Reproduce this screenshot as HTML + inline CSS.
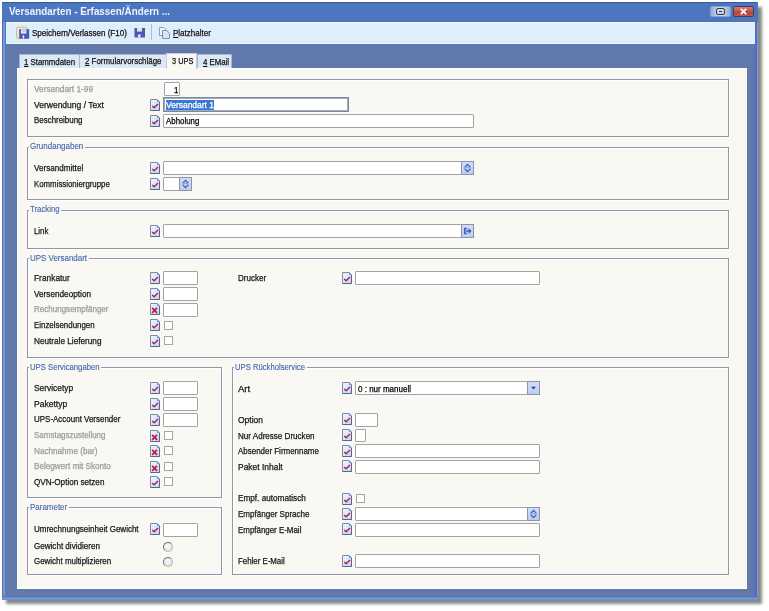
<!DOCTYPE html><html><head><meta charset="utf-8"><style>
html,body{margin:0;padding:0;width:769px;height:611px;overflow:hidden;background:#fff}
body{position:relative;font-family:"Liberation Sans",sans-serif}
.t{position:absolute;white-space:nowrap;line-height:10px;-webkit-text-stroke:0.25px currentColor;transform:scaleX(.93);transform-origin:0 0}
.ic{position:absolute;overflow:visible}
.gl{position:absolute;white-space:nowrap;line-height:10px;font-size:8.5px;transform:scaleX(.93);transform-origin:0 0;color:#4d63a8;background:#f9f8f3;padding:0 1px}
</style></head><body>
<svg width="0" height="0" style="position:absolute">
<defs>
<linearGradient id="gdoc" x1="0" y1="0" x2="1" y2="1"><stop offset="0" stop-color="#f4f8ff"/><stop offset="1" stop-color="#bcd2f2"/></linearGradient>
<symbol id="ick" viewBox="0 0 10 12"><path d="M0.5 11.5V0.5H7.2L9.5 2.8V11.5Z" fill="url(#gdoc)" stroke="#7a89b0"/><path d="M0.5 11.5H9.5V2.8" fill="none" stroke="#56668e"/><path d="M7 0.5L9.5 3H7Z" fill="#6f98d4"/><path d="M2.2 6.9L4.1 8.8L8 4.9" stroke="#bb1c3c" stroke-width="1.35" fill="none"/></symbol>
<symbol id="icx" viewBox="0 0 10 12"><path d="M0.5 11.5V0.5H7.2L9.5 2.8V11.5Z" fill="url(#gdoc)" stroke="#7a89b0"/><path d="M0.5 11.5H9.5V2.8" fill="none" stroke="#56668e"/><path d="M7 0.5L9.5 3H7Z" fill="#6f98d4"/><path d="M2.1 4.9L7 9.8M7 4.9L2.1 9.8" stroke="#d0182e" stroke-width="1.8" fill="none"/></symbol>
<symbol id="ispin" viewBox="0 0 9 10"><path d="M1.6 4.4L4.5 1.4L7.4 4.4M1.6 5.6L4.5 8.6L7.4 5.6" fill="none" stroke="#3a5cb0" stroke-width="1.3"/><path d="M3 4.6H6" stroke="#7c96d4" stroke-width="0.8"/></symbol>
<symbol id="idrop" viewBox="0 0 9 10"><path d="M2 3.8H7L4.5 6.6Z" fill="#2c4a90"/></symbol>
<symbol id="igo" viewBox="0 0 9 10"><path d="M3.8 2.6H1.7V7.4H3.8" fill="none" stroke="#3d5fb0" stroke-width="1.5"/><path d="M3 4.2H5.6V2L8.6 5L5.6 8V5.8H3Z" fill="#3d5fb0"/></symbol>
</defs></svg>

<div style="position:absolute;left:6px;top:7px;width:756px;height:597px;background:#848886;filter:blur(1.7px)"></div>
<div style="position:absolute;left:2px;top:2px;width:756px;height:598px;background:#6179ab;border-radius:2px 2px 0 0"></div>
<div style="position:absolute;left:2px;top:2px;width:1px;height:598px;background:#4f6ec0"></div>
<div style="position:absolute;left:3px;top:2px;width:2px;height:598px;background:#7396d8"></div>
<div style="position:absolute;left:754px;top:2px;width:2px;height:598px;background:#5b6fb8"></div>
<div style="position:absolute;left:756px;top:2px;width:1px;height:598px;background:#4a6ec0"></div>
<div style="position:absolute;left:757px;top:2px;width:1px;height:598px;background:#7a9ad0"></div>
<div style="position:absolute;left:2px;top:596px;width:756px;height:1px;background:#5070b0"></div>
<div style="position:absolute;left:2px;top:597px;width:756px;height:3px;background:#7090d8"></div>
<div style="position:absolute;left:2px;top:2px;width:756px;height:20px;background:#4c76c0;border-top:1px solid #3a5a9e;border-bottom:1px solid #56709f;box-sizing:border-box;border-radius:2px 2px 0 0"></div>
<div class="t" style="left:9px;top:6px;color:#eef3ff;font-size:10.5px;font-weight:bold;transform:scaleX(0.9384);-webkit-text-stroke:0">Versandarten - Erfassen/Ändern ...</div>
<div style="position:absolute;left:710px;top:6px;width:21px;height:11px;background:linear-gradient(90deg,#94abd4,#c6d4ec 35%,#c6d4ec 65%,#94abd4);border:1px solid #87a0cc;box-sizing:border-box;border-radius:2px"></div>
<div style="position:absolute;left:716px;top:8px;width:9px;height:7px;border:1.6px solid #2e3850;border-radius:2px;box-sizing:border-box"></div>
<div style="position:absolute;left:719px;top:11px;width:3px;height:1px;background:#2e3850"></div>
<div style="position:absolute;left:733px;top:6px;width:21px;height:11px;background:linear-gradient(#d8766e,#c85a52 40%,#b8443c 60%,#c8544c);border:1px solid #3c3f66;box-sizing:border-box;border-radius:2px"></div>
<svg class="ic" style="left:739px;top:7px" width="9" height="9"><path d="M1.8 1.8L7.2 7.2M7.2 1.8L1.8 7.2" stroke="#fff" stroke-width="1.7"/></svg>
<div style="position:absolute;left:6px;top:22px;width:749px;height:22px;background:#dfeefc;border-top:1px solid #eef7ff;border-bottom:1px solid #eef7ff;box-sizing:border-box"></div>
<svg class="ic" style="left:16px;top:26px" width="14" height="14"><rect x="0.6" y="1.2" width="10.4" height="11" rx="2" fill="none" stroke="#e2b76a" stroke-width="1.1"/><rect x="3.2" y="3.2" width="10" height="9.5" fill="#4a58ae"/><rect x="5" y="3.4" width="5.4" height="4.2" fill="#eef0f6"/><rect x="6" y="4.4" width="3.4" height="2" fill="#c6cad8"/><rect x="6.6" y="9.2" width="1.6" height="3.5" fill="#dfe3f0"/></svg>
<div class="t" style="left:32px;top:28px;color:#111;font-size:8.5px;font-weight:normal;transform:scaleX(0.942);">Speichern/Verlassen (F10)</div>
<svg class="ic" style="left:134px;top:28px" width="11" height="10"><rect x="0.5" y="0" width="10.5" height="9.5" fill="#4a58ae"/><rect x="3" y="0" width="5" height="3.6" fill="#e6e2d8"/><rect x="4" y="6.4" width="2.6" height="3.1" fill="#dfe3f0"/></svg>
<div style="position:absolute;left:151px;top:24px;width:1px;height:16px;background:#b4bccb"></div>
<svg class="ic" style="left:159px;top:27px" width="12" height="13"><path d="M0.5 0.5H4.8L6.8 2.5V8.5H0.5Z" fill="#eef2fa" stroke="#8d9cb8"/><path d="M3.5 3.5H7.8L10.5 6.2V11.5H3.5Z" fill="#dbe4f6" stroke="#8091b6"/></svg>
<div class="t" style="left:173px;top:28px;color:#111;font-size:8.5px;font-weight:normal;transform:scaleX(0.941);"><u>P</u>latzhalter</div>
<div style="position:absolute;left:17px;top:68px;width:730px;height:521px;background:#f9f8f3;border:1px solid #fdfeff;box-sizing:border-box"></div>
<div style="position:absolute;left:19px;top:54px;width:61px;height:14px;background:#dde8f6;border:1px solid #a9b8d2;border-bottom:none;box-sizing:border-box"></div>
<div class="t" style="left:24px;top:56.5px;color:#111;font-size:8.5px;font-weight:normal;transform:scaleX(0.9223);"><u>1</u> Stammdaten</div>
<div style="position:absolute;left:79px;top:54px;width:88px;height:14px;background:#dde8f6;border:1px solid #a9b8d2;border-bottom:none;box-sizing:border-box"></div>
<div class="t" style="left:85px;top:56px;color:#111;font-size:8.5px;font-weight:normal;"><u>2</u> Formularvorschläge</div>
<div style="position:absolute;left:166px;top:53px;width:31px;height:16px;background:#f9f8f3;border:1px solid #c4cfe2;border-bottom:none;box-sizing:border-box"></div>
<div class="t" style="left:172px;top:55.5px;color:#111;font-size:8.5px;font-weight:normal;transform:scaleX(0.8666);">3 UPS</div>
<div style="position:absolute;left:197px;top:54px;width:35px;height:14px;background:#dde8f6;border:1px solid #a9b8d2;border-bottom:none;box-sizing:border-box"></div>
<div class="t" style="left:203px;top:56.5px;color:#111;font-size:8.5px;font-weight:normal;transform:scaleX(0.9168);"><u>4</u> EMail</div>
<div style="position:absolute;left:27px;top:79px;width:702px;height:58px;border:1px solid #9097ad;box-sizing:border-box;box-shadow:inset 1px 1px 0 #fff,1px 1px 0 #fff"></div>
<div class="t" style="left:34px;top:84px;color:#9a9a9a;font-size:8.5px;font-weight:normal;transform:scaleX(0.9755);">Versandart 1-99</div>
<div style="position:absolute;left:164px;top:82px;width:16px;height:14px;background:#fff;border:1px solid #a4a4a4;box-sizing:border-box;border-radius:1px"></div>
<div class="t" style="left:174px;top:84.5px;color:#000;font-size:8.5px;font-weight:normal;">1</div>
<div class="t" style="left:34px;top:100px;color:#161616;font-size:8.5px;font-weight:normal;transform:scaleX(1.0003);">Verwendung / Text</div>
<svg class="ic" style="left:150px;top:99px" width="10" height="12"><use href="#ick"/></svg>
<div style="position:absolute;left:163px;top:97px;width:186px;height:15px;background:#fff;border:1px solid #7f879f;box-sizing:border-box;box-shadow:inset 0 0 0 1px #a3a9bd"></div>
<div style="position:absolute;left:166px;top:100px;width:48px;height:10px;background:#3a78d8"></div>
<div class="t" style="left:166px;top:100px;color:#fff;font-size:8.5px;font-weight:normal;transform:scaleX(0.9958);">Versandart 1</div>
<div class="t" style="left:34px;top:115px;color:#161616;font-size:8.5px;font-weight:normal;transform:scaleX(0.933);">Beschreibung</div>
<svg class="ic" style="left:150px;top:115px" width="10" height="12"><use href="#ick"/></svg>
<div style="position:absolute;left:163px;top:114px;width:311px;height:14px;background:#fff;border:1px solid #a4a4a4;box-sizing:border-box;border-radius:1px"></div>
<div class="t" style="left:166px;top:116px;color:#000;font-size:8.5px;font-weight:normal;">Abholung</div>
<div style="position:absolute;left:27px;top:147px;width:702px;height:53px;border:1px solid #9097ad;box-sizing:border-box;box-shadow:inset 1px 1px 0 #fff,1px 1px 0 #fff"></div>
<div style="position:absolute;left:29px;top:145px;width:56px;height:4px;background:#f9f8f3"></div>
<div class="t" style="left:30px;top:141px;color:#3f5fae;font-size:8.5px;font-weight:normal;transform:scaleX(0.9397);-webkit-text-stroke:0.1px currentColor">Grundangaben</div>
<div class="t" style="left:34px;top:163px;color:#161616;font-size:8.5px;font-weight:normal;transform:scaleX(0.9553);">Versandmittel</div>
<svg class="ic" style="left:150px;top:162px" width="10" height="12"><use href="#ick"/></svg>
<div style="position:absolute;left:163px;top:161px;width:311px;height:14px;background:#fff;border:1px solid #a4a4a4;box-sizing:border-box;border-radius:1px"></div>
<div style="position:absolute;left:461px;top:161px;width:13px;height:14px;background:linear-gradient(#d2dcf8,#bccdf4);border:1px solid #8e93a6;box-sizing:border-box"></div>
<svg class="ic" style="left:463px;top:163px" width="9" height="10"><use href="#ispin"/></svg>
<div class="t" style="left:34px;top:179px;color:#161616;font-size:8.5px;font-weight:normal;transform:scaleX(0.9221);">Kommissioniergruppe</div>
<svg class="ic" style="left:150px;top:178px" width="10" height="12"><use href="#ick"/></svg>
<div style="position:absolute;left:163px;top:177px;width:29px;height:14px;background:#fff;border:1px solid #a4a4a4;box-sizing:border-box;border-radius:1px"></div>
<div style="position:absolute;left:179px;top:177px;width:13px;height:14px;background:linear-gradient(#d2dcf8,#bccdf4);border:1px solid #8e93a6;box-sizing:border-box"></div>
<svg class="ic" style="left:181px;top:179px" width="9" height="10"><use href="#ispin"/></svg>
<div style="position:absolute;left:27px;top:210px;width:702px;height:39px;border:1px solid #9097ad;box-sizing:border-box;box-shadow:inset 1px 1px 0 #fff,1px 1px 0 #fff"></div>
<div style="position:absolute;left:29px;top:208px;width:32px;height:4px;background:#f9f8f3"></div>
<div class="t" style="left:30px;top:204px;color:#3f5fae;font-size:8.5px;font-weight:normal;transform:scaleX(0.9169);-webkit-text-stroke:0.1px currentColor">Tracking</div>
<div class="t" style="left:34px;top:225.5px;color:#161616;font-size:8.5px;font-weight:normal;transform:scaleX(0.917);">Link</div>
<svg class="ic" style="left:150px;top:225px" width="10" height="12"><use href="#ick"/></svg>
<div style="position:absolute;left:163px;top:224px;width:311px;height:14px;background:#fff;border:1px solid #a4a4a4;box-sizing:border-box;border-radius:1px"></div>
<div style="position:absolute;left:461px;top:224px;width:13px;height:14px;background:linear-gradient(#d2dcf8,#bccdf4);border:1px solid #8e93a6;box-sizing:border-box"></div>
<svg class="ic" style="left:463px;top:226px" width="9" height="10"><use href="#igo"/></svg>
<div style="position:absolute;left:27px;top:258px;width:702px;height:100px;border:1px solid #9097ad;box-sizing:border-box;box-shadow:inset 1px 1px 0 #fff,1px 1px 0 #fff"></div>
<div style="position:absolute;left:29px;top:256px;width:60px;height:4px;background:#f9f8f3"></div>
<div class="t" style="left:30px;top:252.5px;color:#3f5fae;font-size:8.5px;font-weight:normal;transform:scaleX(0.9351);-webkit-text-stroke:0.1px currentColor">UPS Versandart</div>
<div class="t" style="left:34px;top:273px;color:#161616;font-size:8.5px;font-weight:normal;transform:scaleX(0.9842);">Frankatur</div>
<svg class="ic" style="left:150px;top:272px" width="10" height="12"><use href="#ick"/></svg>
<div style="position:absolute;left:163px;top:271px;width:35px;height:14px;background:#fff;border:1px solid #a4a4a4;box-sizing:border-box;border-radius:1px"></div>
<div class="t" style="left:34px;top:289px;color:#161616;font-size:8.5px;font-weight:normal;transform:scaleX(0.9648);">Versendeoption</div>
<svg class="ic" style="left:150px;top:288px" width="10" height="12"><use href="#ick"/></svg>
<div style="position:absolute;left:163px;top:287px;width:35px;height:14px;background:#fff;border:1px solid #a4a4a4;box-sizing:border-box;border-radius:1px"></div>
<div class="t" style="left:34px;top:304px;color:#9a9a9a;font-size:8.5px;font-weight:normal;transform:scaleX(0.944);">Rechungsempfänger</div>
<svg class="ic" style="left:150px;top:303px" width="10" height="12"><use href="#icx"/></svg>
<div style="position:absolute;left:163px;top:303px;width:35px;height:14px;background:#fff;border:1px solid #a4a4a4;box-sizing:border-box;border-radius:1px"></div>
<div class="t" style="left:34px;top:320px;color:#161616;font-size:8.5px;font-weight:normal;transform:scaleX(0.929);">Einzelsendungen</div>
<svg class="ic" style="left:150px;top:319px" width="10" height="12"><use href="#ick"/></svg>
<div style="position:absolute;left:164px;top:321px;width:9px;height:9px;background:#fff;border:1px solid #a7a7a7;box-sizing:border-box"></div>
<div class="t" style="left:34px;top:336px;color:#161616;font-size:8.5px;font-weight:normal;transform:scaleX(0.9651);">Neutrale Lieferung</div>
<svg class="ic" style="left:150px;top:335px" width="10" height="12"><use href="#ick"/></svg>
<div style="position:absolute;left:164px;top:336px;width:9px;height:9px;background:#fff;border:1px solid #a7a7a7;box-sizing:border-box"></div>
<div class="t" style="left:238px;top:273px;color:#161616;font-size:8.5px;font-weight:normal;transform:scaleX(0.944);">Drucker</div>
<svg class="ic" style="left:342px;top:272px" width="10" height="12"><use href="#ick"/></svg>
<div style="position:absolute;left:355px;top:271px;width:185px;height:14px;background:#fff;border:1px solid #a4a4a4;box-sizing:border-box;border-radius:1px"></div>
<div style="position:absolute;left:27px;top:367px;width:195px;height:131px;border:1px solid #9097ad;box-sizing:border-box;box-shadow:inset 1px 1px 0 #fff,1px 1px 0 #fff"></div>
<div style="position:absolute;left:29px;top:365px;width:72px;height:4px;background:#f9f8f3"></div>
<div class="t" style="left:30px;top:362px;color:#3f5fae;font-size:8.5px;font-weight:normal;transform:scaleX(0.9092);-webkit-text-stroke:0.1px currentColor">UPS Servicangaben</div>
<div class="t" style="left:34px;top:383px;color:#161616;font-size:8.5px;font-weight:normal;transform:scaleX(0.9852);">Servicetyp</div>
<svg class="ic" style="left:150px;top:382px" width="10" height="12"><use href="#ick"/></svg>
<div style="position:absolute;left:163px;top:381px;width:35px;height:14px;background:#fff;border:1px solid #a4a4a4;box-sizing:border-box;border-radius:1px"></div>
<div class="t" style="left:34px;top:399px;color:#161616;font-size:8.5px;font-weight:normal;transform:scaleX(1.0037);">Pakettyp</div>
<svg class="ic" style="left:150px;top:398px" width="10" height="12"><use href="#ick"/></svg>
<div style="position:absolute;left:163px;top:397px;width:35px;height:14px;background:#fff;border:1px solid #a4a4a4;box-sizing:border-box;border-radius:1px"></div>
<div class="t" style="left:34px;top:414px;color:#161616;font-size:8.5px;font-weight:normal;transform:scaleX(0.9377);">UPS-Account Versender</div>
<svg class="ic" style="left:150px;top:414px" width="10" height="12"><use href="#ick"/></svg>
<div style="position:absolute;left:163px;top:413px;width:35px;height:14px;background:#fff;border:1px solid #a4a4a4;box-sizing:border-box;border-radius:1px"></div>
<div class="t" style="left:34px;top:430px;color:#9a9a9a;font-size:8.5px;font-weight:normal;transform:scaleX(0.9398);">Samstagszustellung</div>
<svg class="ic" style="left:150px;top:430px" width="10" height="12"><use href="#icx"/></svg>
<div style="position:absolute;left:164px;top:431px;width:9px;height:9px;background:#fff;border:1px solid #a7a7a7;box-sizing:border-box"></div>
<div class="t" style="left:34px;top:446px;color:#9a9a9a;font-size:8.5px;font-weight:normal;transform:scaleX(0.9586);">Nachnahme (bar)</div>
<svg class="ic" style="left:150px;top:445px" width="10" height="12"><use href="#icx"/></svg>
<div style="position:absolute;left:164px;top:446px;width:9px;height:9px;background:#fff;border:1px solid #a7a7a7;box-sizing:border-box"></div>
<div class="t" style="left:34px;top:461px;color:#9a9a9a;font-size:8.5px;font-weight:normal;transform:scaleX(0.9561);">Belegwert mit Skonto</div>
<svg class="ic" style="left:150px;top:461px" width="10" height="12"><use href="#icx"/></svg>
<div style="position:absolute;left:164px;top:462px;width:9px;height:9px;background:#fff;border:1px solid #a7a7a7;box-sizing:border-box"></div>
<div class="t" style="left:34px;top:477px;color:#161616;font-size:8.5px;font-weight:normal;transform:scaleX(0.9552);">QVN-Option setzen</div>
<svg class="ic" style="left:150px;top:476px" width="10" height="12"><use href="#ick"/></svg>
<div style="position:absolute;left:164px;top:477px;width:9px;height:9px;background:#fff;border:1px solid #a7a7a7;box-sizing:border-box"></div>
<div style="position:absolute;left:27px;top:507px;width:195px;height:68px;border:1px solid #9097ad;box-sizing:border-box;box-shadow:inset 1px 1px 0 #fff,1px 1px 0 #fff"></div>
<div style="position:absolute;left:29px;top:505px;width:40px;height:4px;background:#f9f8f3"></div>
<div class="t" style="left:30px;top:501.5px;color:#3f5fae;font-size:8.5px;font-weight:normal;transform:scaleX(0.9373);-webkit-text-stroke:0.1px currentColor">Parameter</div>
<div class="t" style="left:34px;top:524px;color:#161616;font-size:8.5px;font-weight:normal;transform:scaleX(0.9421);">Umrechnungseinheit Gewicht</div>
<svg class="ic" style="left:150px;top:523px" width="10" height="12"><use href="#ick"/></svg>
<div style="position:absolute;left:163px;top:523px;width:35px;height:14px;background:#fff;border:1px solid #a4a4a4;box-sizing:border-box;border-radius:1px"></div>
<div class="t" style="left:34px;top:540.5px;color:#161616;font-size:8.5px;font-weight:normal;transform:scaleX(0.9488);">Gewicht dividieren</div>
<div style="position:absolute;left:163px;top:542px;width:10px;height:10px;border-radius:50%;background:radial-gradient(circle at 45% 40%,#fbfbfb,#e8e8e8 55%,#cfcfcf);border:1px solid;border-color:#707070 #b4b4b4 #b4b4b4 #707070;box-sizing:border-box"></div>
<div class="t" style="left:34px;top:556px;color:#161616;font-size:8.5px;font-weight:normal;transform:scaleX(0.9338);">Gewicht multiplizieren</div>
<div style="position:absolute;left:163px;top:557px;width:10px;height:10px;border-radius:50%;background:radial-gradient(circle at 45% 40%,#fbfbfb,#e8e8e8 55%,#cfcfcf);border:1px solid;border-color:#707070 #b4b4b4 #b4b4b4 #707070;box-sizing:border-box"></div>
<div style="position:absolute;left:232px;top:367px;width:497px;height:208px;border:1px solid #9097ad;box-sizing:border-box;box-shadow:inset 1px 1px 0 #fff,1px 1px 0 #fff"></div>
<div style="position:absolute;left:234px;top:365px;width:73px;height:4px;background:#f9f8f3"></div>
<div class="t" style="left:235px;top:362px;color:#3f5fae;font-size:8.5px;font-weight:normal;transform:scaleX(0.9034);-webkit-text-stroke:0.1px currentColor">UPS Rückholservice</div>
<div class="t" style="left:238px;top:383.5px;color:#161616;font-size:8.5px;font-weight:normal;transform:scaleX(1.1218);">Art</div>
<svg class="ic" style="left:342px;top:382px" width="10" height="12"><use href="#ick"/></svg>
<div style="position:absolute;left:355px;top:381px;width:185px;height:14px;background:#fff;border:1px solid #a4a4a4;box-sizing:border-box;border-radius:1px"></div>
<div style="position:absolute;left:527px;top:381px;width:13px;height:14px;background:linear-gradient(#d2dcf8,#bccdf4);border:1px solid #8e93a6;box-sizing:border-box"></div>
<svg class="ic" style="left:529px;top:383px" width="9" height="10"><use href="#idrop"/></svg>
<div class="t" style="left:358px;top:383.5px;color:#000;font-size:8.5px;font-weight:normal;transform:scaleX(0.9425);">0 : nur manuell</div>
<div class="t" style="left:238px;top:415px;color:#161616;font-size:8.5px;font-weight:normal;transform:scaleX(0.9981);">Option</div>
<svg class="ic" style="left:342px;top:413px" width="10" height="12"><use href="#ick"/></svg>
<div style="position:absolute;left:355px;top:413px;width:23px;height:14px;background:#fff;border:1px solid #a4a4a4;box-sizing:border-box;border-radius:1px"></div>
<div class="t" style="left:238px;top:430.5px;color:#161616;font-size:8.5px;font-weight:normal;transform:scaleX(0.9481);">Nur Adresse Drucken</div>
<svg class="ic" style="left:342px;top:429px" width="10" height="12"><use href="#ick"/></svg>
<div style="position:absolute;left:355px;top:429px;width:11px;height:13px;background:#fff;border:1px solid #a4a4a4;box-sizing:border-box;border-radius:1px"></div>
<div class="t" style="left:238px;top:446px;color:#161616;font-size:8.5px;font-weight:normal;transform:scaleX(0.9356);">Absender Firmenname</div>
<svg class="ic" style="left:342px;top:445px" width="10" height="12"><use href="#ick"/></svg>
<div style="position:absolute;left:355px;top:444px;width:185px;height:14px;background:#fff;border:1px solid #a4a4a4;box-sizing:border-box;border-radius:1px"></div>
<div class="t" style="left:238px;top:461.5px;color:#161616;font-size:8.5px;font-weight:normal;transform:scaleX(0.9935);">Paket Inhalt</div>
<svg class="ic" style="left:342px;top:460px" width="10" height="12"><use href="#ick"/></svg>
<div style="position:absolute;left:355px;top:460px;width:185px;height:14px;background:#fff;border:1px solid #a4a4a4;box-sizing:border-box;border-radius:1px"></div>
<div class="t" style="left:238px;top:493px;color:#161616;font-size:8.5px;font-weight:normal;transform:scaleX(0.9632);">Empf. automatisch</div>
<svg class="ic" style="left:342px;top:493px" width="10" height="12"><use href="#ick"/></svg>
<div style="position:absolute;left:356px;top:494px;width:9px;height:9px;background:#fff;border:1px solid #a7a7a7;box-sizing:border-box"></div>
<div class="t" style="left:238px;top:509px;color:#161616;font-size:8.5px;font-weight:normal;transform:scaleX(0.9456);">Empfänger Sprache</div>
<svg class="ic" style="left:342px;top:508px" width="10" height="12"><use href="#ick"/></svg>
<div style="position:absolute;left:355px;top:507px;width:185px;height:14px;background:#fff;border:1px solid #a4a4a4;box-sizing:border-box;border-radius:1px"></div>
<div style="position:absolute;left:527px;top:507px;width:13px;height:14px;background:linear-gradient(#d2dcf8,#bccdf4);border:1px solid #8e93a6;box-sizing:border-box"></div>
<svg class="ic" style="left:529px;top:509px" width="9" height="10"><use href="#ispin"/></svg>
<div class="t" style="left:238px;top:524.5px;color:#161616;font-size:8.5px;font-weight:normal;transform:scaleX(0.9319);">Empfänger E-Mail</div>
<svg class="ic" style="left:342px;top:523px" width="10" height="12"><use href="#ick"/></svg>
<div style="position:absolute;left:355px;top:523px;width:185px;height:14px;background:#fff;border:1px solid #a4a4a4;box-sizing:border-box;border-radius:1px"></div>
<div class="t" style="left:238px;top:556px;color:#161616;font-size:8.5px;font-weight:normal;transform:scaleX(0.9239);">Fehler E-Mail</div>
<svg class="ic" style="left:342px;top:555px" width="10" height="12"><use href="#ick"/></svg>
<div style="position:absolute;left:355px;top:554px;width:185px;height:14px;background:#fff;border:1px solid #a4a4a4;box-sizing:border-box;border-radius:1px"></div>
</body></html>
